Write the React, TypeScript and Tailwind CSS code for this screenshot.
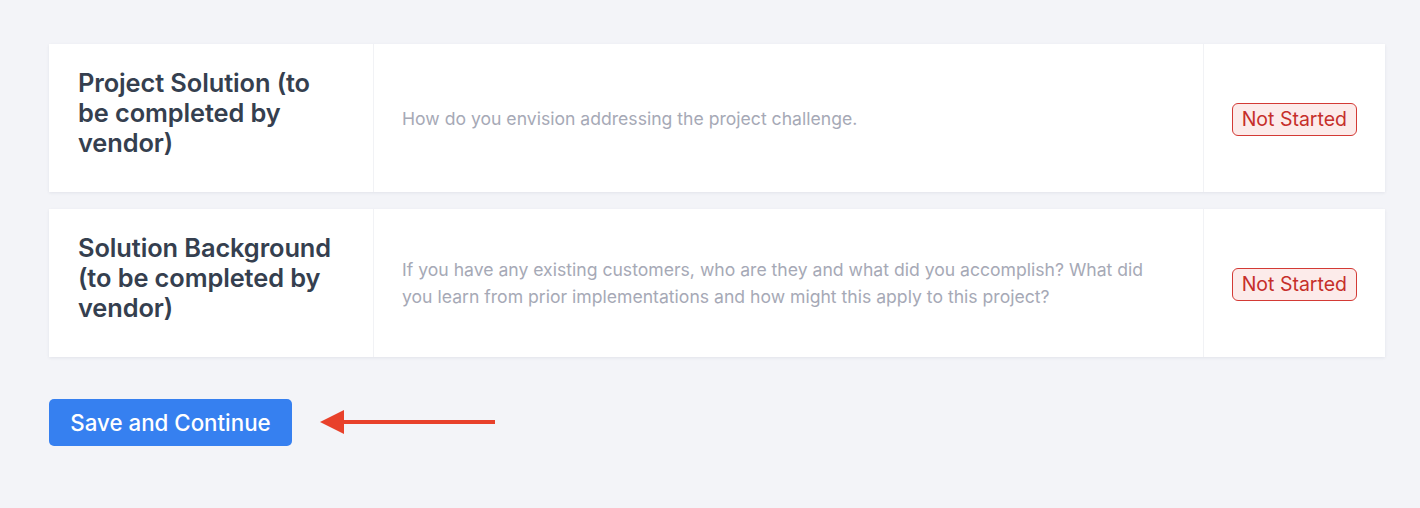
import React from "react";

const rows = [
  {
    title: "Project Solution (to be completed by vendor)",
    desc: "How do you envision addressing the project challenge.",
  },
  {
    title: "Solution Background (to be completed by vendor)",
    desc: "If you have any existing customers, who are they and what did you accomplish? What did you learn from prior implementations and how might this apply to this project?",
  },
];

export default function App() {
  return (
    <div
      className="min-h-[508px] w-full bg-[#f3f4f8] pt-[44px] pl-[49px] pr-[35px]"
      style={{ fontFamily: "Inter, 'Noto Sans', sans-serif" }}
    >
      <div className="flex flex-col gap-[17px]">
        {rows.map((r) => (
          <div
            key={r.title}
            className="grid grid-cols-[325px_1fr_auto] bg-white shadow-[0_1px_3px_rgba(30,40,80,0.08)]"
          >
            <div className="flex items-center border-r border-[#f1f2f5] px-[29px] pt-[24px] pb-[34px]">
              <h3 className="max-w-[258px] text-[25.4px] font-semibold leading-[30px] tracking-[-0.1px] text-[#353f4f]">
                {r.title}
              </h3>
            </div>
            <div className="flex items-center border-r border-[#f1f2f5] px-[28px]">
              <p className="text-[17.6px] leading-[27px] text-[#a6a9b6]">{r.desc}</p>
            </div>
            <div className="flex items-center px-[28px] pt-[2px]">
              <span className="rounded-[6px] border border-[#d33a35] bg-[#fcebea] px-[9px] py-[3px] text-[19.5px] leading-[25px] text-[#c62f2a]">
                Not Started
              </span>
            </div>
          </div>
        ))}
      </div>
      <div className="mt-[42px] flex items-center">
        <button className="h-[47px] w-[243px] rounded-[5px] bg-[#3680f0] text-[22.3px] font-medium text-white">
          Save and Continue
        </button>
        <svg width="180" height="30" viewBox="0 0 180 30" className="ml-[28px]">
          <line x1="20" y1="14" x2="175" y2="14" stroke="#e8412b" strokeWidth="4" />
          <polygon points="0,14 24,2 24,26" fill="#e8412b" />
        </svg>
      </div>
    </div>
  );
}
